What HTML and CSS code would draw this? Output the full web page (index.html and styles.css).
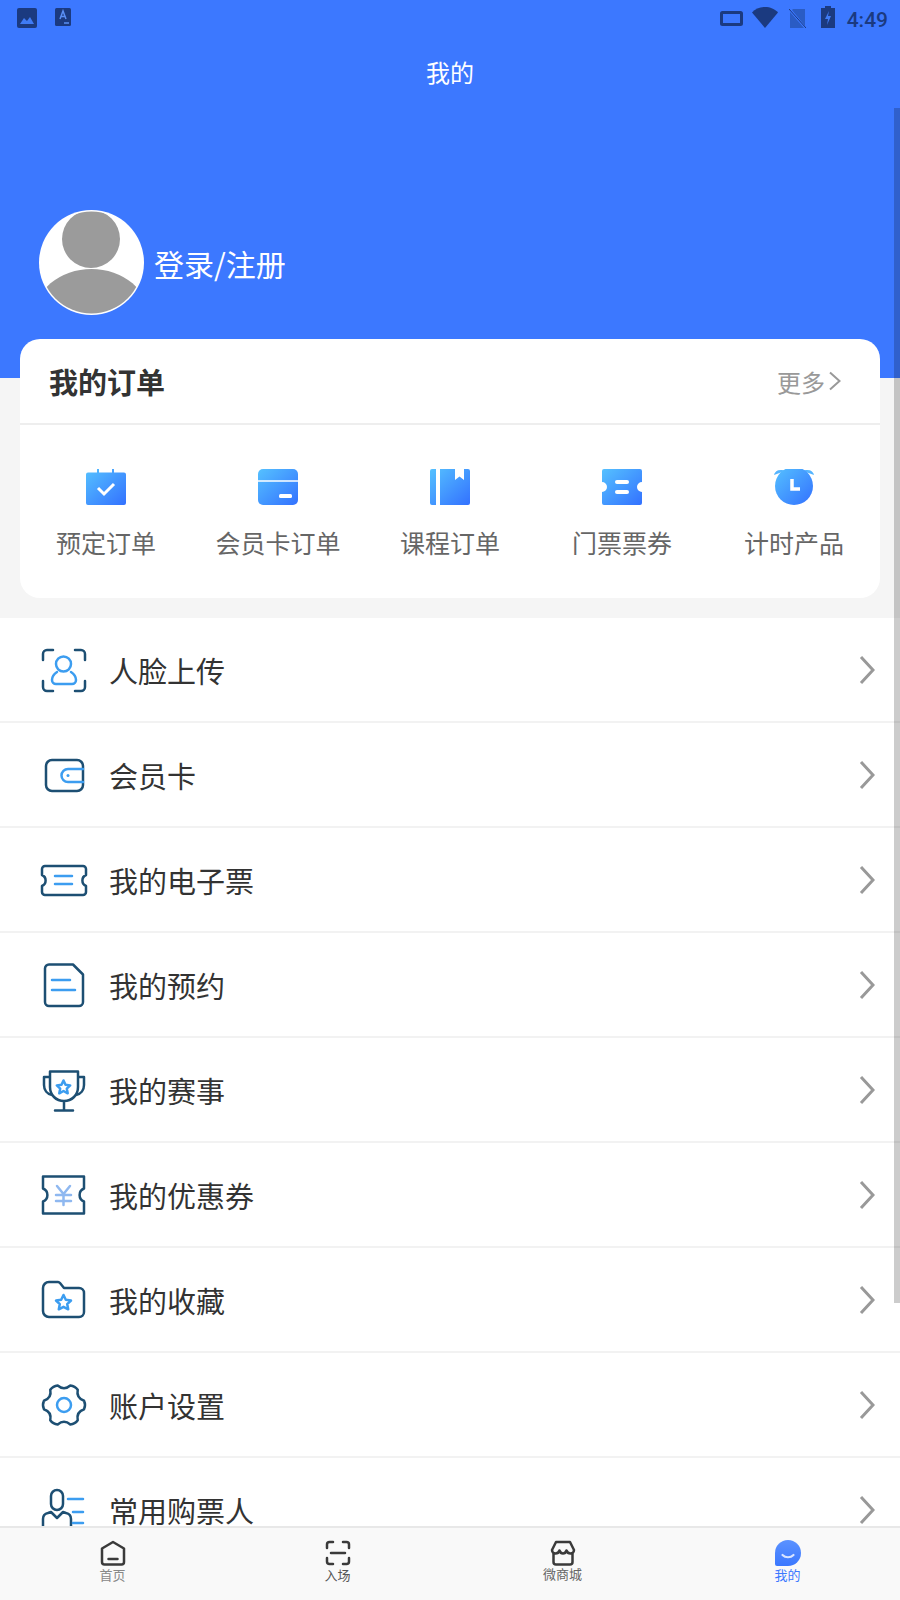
FILE: index.html
```html
<!DOCTYPE html>
<html>
    <head>
        <meta charset="utf-8" />
        <meta name="viewport" content="width=device-width, initial-scale=1" />
        <title>我的</title>
        <link rel="stylesheet" href="styles.css">
    </head>
    <body>
        <!-- shared gradient for the order icons -->
        <svg class="defs" width="0" height="0">
            <defs>
                <linearGradient id="blue" x1="0" y1="0" x2="1" y2="1">
                    <stop offset="0" stop-color="#55c1ff" />
                    <stop offset="1" stop-color="#3371ff" />
                </linearGradient>
                <linearGradient id="tabblue" x1="0" y1="0" x2="0" y2="1">
                    <stop offset="0" stop-color="#5b92ff" />
                    <stop offset="1" stop-color="#3b78ff" />
                </linearGradient>
            </defs>
        </svg>

        <div class="app">
            <div class="scroller">
                <header class="hero">
                    <div class="status">
                        <div class="status-left">
                            <svg width="20" height="20" viewBox="0 0 20 20"><rect width="20" height="20" rx="2" fill="#1b3a80" /><path d="M3 16l4-6 3 3 3-4 4 7z" fill="#3f7bf5" /></svg>
                            <svg width="16" height="18" viewBox="0 0 16 18"><rect width="16" height="18" rx="1.5" fill="#1b3a80" /><path d="M5 11l3-8 3 8M6 8.5h4" fill="none" stroke="#5a8ff5" stroke-width="1.5" /><path d="M9 15h5" stroke="#5a8ff5" stroke-width="1.5" /></svg>
                        </div>
                        <div class="status-right">
                            <svg width="23" height="15" viewBox="0 0 23 15"><rect x="1.5" y="1.5" width="20" height="12" rx="1" fill="none" stroke="#1b3a80" stroke-width="3" /></svg>
                            <svg class="wifi" width="26" height="21" viewBox="0 0 26 21"><path d="M0 5.500C3 2 8 0 13 0s10 2 13 5.500L13 21z" fill="#1b3a80" /></svg>
                            <svg class="sim" width="17" height="19" viewBox="0 0 17 19"><path d="M4 0h12v17L3 1z" fill="#2a5cc4" /><path d="M1 3v16h14z" fill="#2a5cc4" /><path d="M0 0l17 19" stroke="#1b3a80" stroke-width="1" /></svg>
                            <svg class="batt" width="14" height="22" viewBox="0 0 14 22"><path d="M4 0h6v2h4v20H0V2h4z" fill="#1b3a80" /><path d="M8 5l-4 8h3l-1 6 4-9H7z" fill="#3f7bf5" /></svg>
                            <span class="clock">4:49</span>
                        </div>
                    </div>
                    <div class="title">我的</div>
                    <div class="profile">
                        <svg class="avatar" width="105" height="105" viewBox="0 0 105 105">
                            <clipPath id="round"><circle cx="52.500" cy="52.500" r="51" /></clipPath>
                            <circle cx="52.500" cy="52.500" r="52.500" fill="#fff" />
                            <g clip-path="url(#round)" fill="#9b9b9b">
                                <circle cx="52" cy="29" r="29" />
                                <ellipse cx="52.500" cy="108" rx="58" ry="49" />
                            </g>
                        </svg>
                        <span class="login">登录/注册</span>
                    </div>
                </header>

                <section class="card">
                    <div class="card-head">
                        <h2>我的订单</h2>
                        <span class="more">更多<svg width="14" height="20" viewBox="0 0 14 20"><path d="M2 1.500l9.500 8.500L2 18.500" fill="none" stroke="#999" stroke-width="2" /></svg></span>
                    </div>
                    <div class="orders">
                        <div class="order">
                            <svg width="40" height="36" viewBox="0 0 40 36"><path d="M11 0h2v3.500h13V0h2v3.500h10a2 2 0 0 1 2 2V34a2 2 0 0 1-2 2H2a2 2 0 0 1-2-2V5.500a2 2 0 0 1 2-2h9z" fill="url(#blue)" /><path d="M12 19l6 6 10-10" fill="none" stroke="#fff" stroke-width="3" /></svg>
                            <span>预定订单</span>
                        </div>
                        <div class="order">
                            <svg width="40" height="36" viewBox="0 0 40 36"><rect width="40" height="36" rx="5" fill="url(#blue)" /><path d="M0 12h40" stroke="#fff" stroke-width="1.500" /><rect x="21" y="25" width="13" height="4" rx="1.500" fill="#fff" /></svg>
                            <span>会员卡订单</span>
                        </div>
                        <div class="order">
                            <svg width="40" height="36" viewBox="0 0 40 36"><path d="M2 0h4v36H2a2 2 0 0 1-2-2V2a2 2 0 0 1 2-2zM10 0h15v11l4.500-3.500L34 11V0h4a2 2 0 0 1 2 2v32a2 2 0 0 1-2 2H10z" fill="url(#blue)" /></svg>
                            <span>课程订单</span>
                        </div>
                        <div class="order">
                            <svg width="40" height="36" viewBox="0 0 40 36"><path d="M2 0h36a2 2 0 0 1 2 2v11a5 5 0 0 0 0 10v11a2 2 0 0 1-2 2H2a2 2 0 0 1-2-2V23a5 5 0 0 0 0-10V2a2 2 0 0 1 2-2z" fill="url(#blue)" /><rect x="13" y="11" width="14" height="4" rx="2" fill="#fff" /><rect x="13" y="21" width="14" height="4" rx="2" fill="#fff" /></svg>
                            <span>门票票券</span>
                        </div>
                        <div class="order">
                            <svg width="40" height="36" viewBox="0 0 40 36"><path d="M0 6a7 6 0 0 1 11-4zM40 6a7 6 0 0 0-11-4z" fill="#55b5ff" /><circle cx="20" cy="17" r="19" fill="url(#blue)" transform="translate(0 0)" /><path d="M18 10v10h8" fill="none" stroke="#fff" stroke-width="3.500" /></svg>
                            <span>计时产品</span>
                        </div>
                    </div>
                </section>

                <ul class="menu">
                    <li>
                        <svg class="ico" width="48" height="48" viewBox="0 0 48 48">
                            <path class="dk" d="M3 14V8a4 4 0 0 1 4-4h6M35 4h6a4 4 0 0 1 4 4v6M3 35v6a4 4 0 0 0 4 4h6M45 35v6a4 4 0 0 1-4 4h-6" />
                            <circle class="lt" cx="23.500" cy="18" r="7.500" />
                            <path class="lt" d="M17 26c-3 2-5 5-5 8a4 4 0 0 0 4 4h16a4 4 0 0 0 4-4c0-3-2-6-5-8" />
                        </svg>
                        <span>人脸上传</span>
                        <svg class="go" width="16" height="30" viewBox="0 0 16 30"><path d="M2 2l12 13L2 28" /></svg>
                    </li>
                    <li>
                        <svg class="ico" width="48" height="48" viewBox="0 0 48 48">
                            <rect class="dk" x="6" y="9" width="37" height="31" rx="6" />
                            <path class="lt" d="M43 18H28a6.500 6.500 0 0 0 0 13h15" />
                            <circle cx="28" cy="24.500" r="1.500" fill="#3c9df0" />
                        </svg>
                        <span>会员卡</span>
                        <svg class="go" width="16" height="30" viewBox="0 0 16 30"><path d="M2 2l12 13L2 28" /></svg>
                    </li>
                    <li>
                        <svg class="ico" width="48" height="48" viewBox="0 0 48 48">
                            <path class="dk" d="M5 10h38a3 3 0 0 1 3 3v6a6 6 0 0 0 0 11v6a3 3 0 0 1-3 3H5a3 3 0 0 1-3-3v-6a6 6 0 0 0 0-11v-6a3 3 0 0 1 3-3z" />
                            <path class="lt" d="M15 20h17M15 28h17" />
                        </svg>
                        <span>我的电子票</span>
                        <svg class="go" width="16" height="30" viewBox="0 0 16 30"><path d="M2 2l12 13L2 28" /></svg>
                    </li>
                    <li>
                        <svg class="ico" width="48" height="48" viewBox="0 0 48 48">
                            <path class="dk" d="M9 3.500h24l10 10V41a4 4 0 0 1-4 4H9a4 4 0 0 1-4-4V7.500a4 4 0 0 1 4-4z" />
                            <path class="lt" d="M12 19h18M12 29h23" />
                        </svg>
                        <span>我的预约</span>
                        <svg class="go" width="16" height="30" viewBox="0 0 16 30"><path d="M2 2l12 13L2 28" /></svg>
                    </li>
                    <li>
                        <svg class="ico" width="48" height="48" viewBox="0 0 48 48">
                            <path class="dk" d="M10 5.500h28V21c0 8-6 14-14 14s-14-6-14-14zM10 11H4v8c0 5 3 9 8 10M38 11h6v8c0 5-3 9-8 10M24 35v9M15 44.500h18" />
                            <path class="lt" d="M23.500 14.500l2 4.300 4.700.6-3.400 3.200.9 4.700-4.200-2.300-4.200 2.300.9-4.700-3.400-3.200 4.700-.6z" />
                        </svg>
                        <span>我的赛事</span>
                        <svg class="go" width="16" height="30" viewBox="0 0 16 30"><path d="M2 2l12 13L2 28" /></svg>
                    </li>
                    <li>
                        <svg class="ico" width="48" height="48" viewBox="0 0 48 48">
                            <path class="dk" d="M3 5.500h41v12a7 7 0 0 0 0 13v12H3v-12a7 7 0 0 0 0-13z" />
                            <path class="yen" d="M17 15l6.500 8 6.500-8M16 24h15M16 30h15M23.500 23v11" />
                        </svg>
                        <span>我的优惠券</span>
                        <svg class="go" width="16" height="30" viewBox="0 0 16 30"><path d="M2 2l12 13L2 28" /></svg>
                    </li>
                    <li>
                        <svg class="ico" width="48" height="48" viewBox="0 0 48 48">
                            <path class="dk" d="M9 6h9a3 3 0 0 1 2 1l4 5h15a5 5 0 0 1 5 5v19a5 5 0 0 1-5 5H9a6 6 0 0 1-6-6V12a6 6 0 0 1 6-6z" />
                            <path class="lt" d="M23.500 19l2.300 4.800 5.200.7-3.800 3.600 1 5.200-4.700-2.500-4.700 2.500 1-5.200-3.800-3.600 5.200-.7z" />
                        </svg>
                        <span>我的收藏</span>
                        <svg class="go" width="16" height="30" viewBox="0 0 16 30"><path d="M2 2l12 13L2 28" /></svg>
                    </li>
                    <li>
                        <svg class="ico" width="48" height="48" viewBox="0 0 48 48">
                            <path class="dk" d="M44.050 19.740Q46 24 44.050 28.260Q36.120 31 37.720 39.230Q35 43.050 30.330 43.500Q24 38 17.670 43.500Q13 43.050 10.280 39.230Q11.880 31 3.950 28.260Q2 24 3.950 19.740Q11.880 17 10.280 8.770Q13 4.950 17.670 4.500Q24 10 30.330 4.500Q35 4.950 37.720 8.770Q36.120 17 44.050 19.740Z" />
                            <circle class="lt" cx="24" cy="24" r="7" />
                        </svg>
                        <span>账户设置</span>
                        <svg class="go" width="16" height="30" viewBox="0 0 16 30"><path d="M2 2l12 13L2 28" /></svg>
                    </li>
                    <li>
                        <svg class="ico" width="48" height="48" viewBox="0 0 48 48">
                            <rect class="dk" x="11" y="4" width="12" height="20" rx="6" />
                            <path class="dk" d="M3 50V33q0-5 5-6l3-1 6 6 6-6 3 1q5 1 5 6v17" />
                            <path class="lt" d="M28 13h15M33 26h10M33 37h10" />
                        </svg>
                        <span>常用购票人</span>
                        <svg class="go" width="16" height="30" viewBox="0 0 16 30"><path d="M2 2l12 13L2 28" /></svg>
                    </li>
                </ul>
            </div>

            <div class="scrollbar"></div>

            <nav class="tabs">
                <div class="tab">
                    <svg width="26" height="26" viewBox="0 0 26 26"><path class="tk" d="M2 8.500L13 2l11 6.500V22a2.500 2.500 0 0 1-2.500 2.500h-17A2.500 2.500 0 0 1 2 22zM8.500 19h9" /></svg>
                    <span class="grey">首页</span>
                </div>
                <div class="tab">
                    <svg width="26" height="26" viewBox="0 0 26 26"><path class="tk" d="M2 8V4.500A2.500 2.500 0 0 1 4.500 2H8M18 2h3.500A2.500 2.500 0 0 1 24 4.500V8M2 18v3.500A2.500 2.500 0 0 0 4.500 24H8M18 24h3.500a2.500 2.500 0 0 0 2.500-2.500V18M6 13h14" /></svg>
                    <span>入场</span>
                </div>
                <div class="tab">
                    <svg width="26" height="26" viewBox="0 0 26 26"><path class="tk" d="M6 2h14l4 8c0 2-1.500 3.500-3.500 3.500S17 12 16.500 10.500c-.5 1.500-2 3-3.500 3s-3-1.500-3.500-3C9 12 7.500 13.500 5.500 13.500S2 12 2 10zM3.500 13v9a2.500 2.500 0 0 0 2.500 2.500h14a2.500 2.500 0 0 0 2.500-2.500v-9" /></svg>
                    <span class="up">微商城</span>
                </div>
                <div class="tab active">
                    <svg width="26" height="26" viewBox="0 0 26 26"><path d="M13 0a13 13 0 0 1 0 26H2a2 2 0 0 1-2-2V13A13 13 0 0 1 13 0z" fill="url(#tabblue)" /><path d="M7.500 15c3 3 8 3 11 0" fill="none" stroke="#d8e4ff" stroke-width="2.200" stroke-linecap="round" /></svg>
                    <span>我的</span>
                </div>
            </nav>
        </div>
    </body>
</html>
```

FILE: styles.css
```css
body {
    margin: 0;
    padding: 0;
    font-family: "Noto Sans CJK SC", Roboto, sans-serif;
    color: #333;
}

.defs {
    position: absolute;
}

.app {
    position: relative;
    width: 900px;
    height: 1600px;
    display: flex;
    flex-flow: column;
    overflow: hidden;
    background-color: #f5f5f5;
}

.scroller {
    flex: 1;
    min-height: 0;
    overflow: hidden;
}

/* blue top area */
.hero {
    height: 378px;
    background-color: #3c78ff;
}

.status {
    height: 36px;
    display: flex;
    align-items: flex-start;
    justify-content: space-between;
}

.status-left {
    display: flex;
    gap: 18px;
    padding: 8px 0 0 17px;
}

.status-right {
    display: flex;
    align-items: flex-start;
    padding: 11px 12px 0 0;
}

.wifi {
    margin: -4px 0 0 9px;
}

.sim {
    margin: -2px 0 0 11px;
}

.batt {
    margin: -5px 0 0 15px;
}

.clock {
    margin: -3px 0 0 12px;
    font-family: Roboto, sans-serif;
    font-size: 21px;
    font-weight: 500;
    line-height: 24px;
    color: #1b3a80;
}

.title {
    height: 72px;
    line-height: 72px;
    text-align: center;
    font-size: 24px;
    color: #fff;
}

.profile {
    display: flex;
    align-items: center;
    gap: 10px;
    margin-top: 102px;
    padding-left: 39px;
}

.login {
    font-size: 30px;
    color: #fff;
}

/* order card */
.card {
    height: 259px;
    margin: -39px 20px 20px;
    border-radius: 20px;
    background-color: #fff;
}

.card-head {
    height: 84px;
    display: flex;
    align-items: center;
    justify-content: space-between;
    padding: 0 38px 0 29px;
    border-bottom: 2px solid #eee;
}

.card-head h2 {
    margin: 0;
    font-size: 29px;
    font-weight: 700;
}

.more {
    display: flex;
    align-items: center;
    gap: 3px;
    font-size: 24px;
    color: #999;
}

.orders {
    display: grid;
    grid-template-columns: repeat(5, 1fr);
    padding-top: 44px;
}

.order {
    display: flex;
    flex-flow: column;
    align-items: center;
    gap: 19px;
    font-size: 25px;
    line-height: 36px;
    color: #666;
}

/* settings list */
.menu {
    margin: 0;
    padding: 0;
    list-style: none;
    background-color: #fff;
}

.menu li {
    height: 103px;
    display: flex;
    align-items: center;
    gap: 21px;
    padding: 0 25px 0 40px;
    border-bottom: 2px solid #f2f2f2;
    font-size: 29px;
}

.ico {
    flex: none;
    fill: none;
    stroke-width: 2.5;
    stroke-linecap: round;
    stroke-linejoin: round;
}

.dk {
    fill: none;
    stroke: #1d4f73;
}

.lt {
    fill: none;
    stroke: #3c9df0;
}

.yen {
    fill: none;
    stroke: #8fb8f0;
}

.go {
    margin-left: auto;
    fill: none;
    stroke: #999;
    stroke-width: 3;
}

.scrollbar {
    position: absolute;
    top: 108px;
    right: 0;
    width: 6px;
    height: 1195px;
    background-color: rgba(0, 0, 0, 0.2);
}

/* bottom tabs */
.tabs {
    flex: none;
    height: 72px;
    display: grid;
    grid-template-columns: repeat(4, 1fr);
    border-top: 2px solid #e8e8e8;
    background-color: #f9f9f9;
}

.tab {
    display: flex;
    flex-flow: column;
    align-items: center;
    padding-top: 12px;
    font-size: 13px;
    line-height: 18px;
    color: #555;
}

.tab .grey {
    color: #888;
}

.tab .up {
    margin-top: -1px;
    color: #666;
}

.tab.active {
    color: #3c78ff;
}

.tk {
    fill: none;
    stroke: #3a3a3a;
    stroke-width: 2.5;
    stroke-linecap: round;
    stroke-linejoin: round;
}
```
